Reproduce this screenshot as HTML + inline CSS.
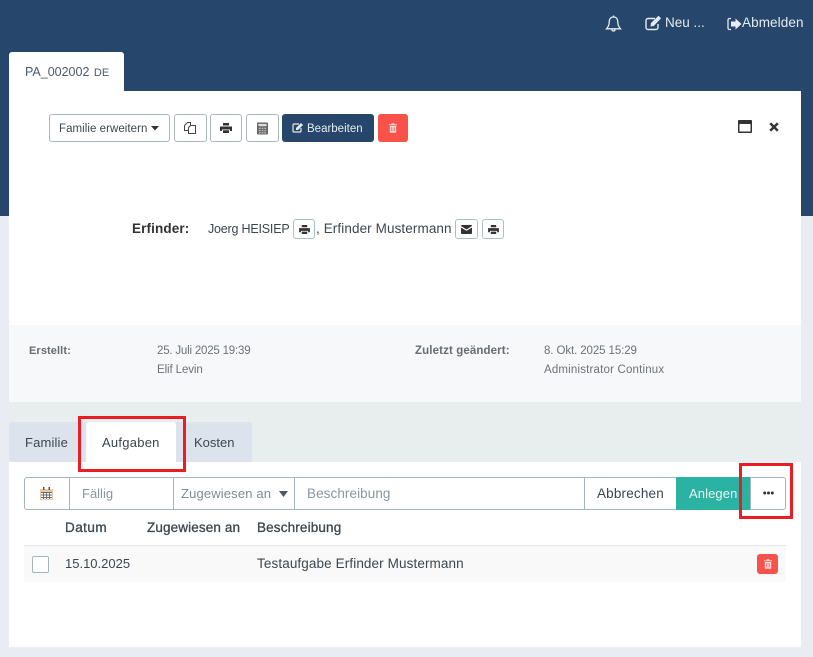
<!DOCTYPE html>
<html><head><meta charset="utf-8"><style>
html,body{margin:0;padding:0}
body{width:813px;height:657px;position:relative;overflow:hidden;background:#e9edf3;font-family:"Liberation Sans",sans-serif;color:#3c4650}
.a{position:absolute;box-sizing:border-box}
.t{position:absolute;white-space:nowrap;line-height:16px;font-size:13.5px}
.b{position:absolute;box-sizing:border-box;border:1px solid #a9b8bd;border-radius:3px;background:#fff}
svg{position:absolute;display:block}
</style></head><body>
<div class="a" style="left:0;top:0;width:813px;height:216px;background:#26476b"></div>
<div class="a" style="left:9px;top:52px;width:115px;height:40px;background:#fff;border-radius:3px 3px 0 0"></div>
<div class="a" style="left:9px;top:91px;width:792px;height:556px;background:#fff"></div>
<div class="a" style="left:9px;top:325px;width:792px;height:77px;background:#f7f8fa"></div>
<div class="a" style="left:9px;top:402px;width:792px;height:60px;background:#e8edee"></div>
<div class="a" style="left:9px;top:422px;width:243px;height:40px;background:#dce3ec;border-radius:3px 3px 0 0"></div>
<div class="a" style="left:86px;top:422px;width:90px;height:40px;background:#fff;border-radius:3px 3px 0 0"></div>

<!-- header -->
<svg style="left:605px;top:15px" width="17" height="18" viewBox="0 0 17 18" fill="none" stroke="#e6ebf0" stroke-width="1.3"><path d="M8.500 2c-3 0-4.300 2.300-4.300 5 0 3.500-1 5-2.700 6.800h14c-1.700-1.800-2.700-3.300-2.700-6.800 0-2.700-1.300-5-4.300-5z"/><path d="M7 14.500c0 2 3 2 3 0M8.500 .5v1.500"/></svg>
<svg style="left:645px;top:15px" width="17" height="16" viewBox="0 0 17 16" fill="none"><path d="M10 3.500H3a2 2 0 0 0-2 2v7a2 2 0 0 0 2 2h8a2 2 0 0 0 2-2V9" stroke="#e6ebf0" stroke-width="1.400"/><path d="M6 8l7.500-7.300 2.600 2.600L8.800 11 5.500 11.500z" fill="#e6ebf0"/></svg>
<div class="t" style="left:665px;top:15px;color:#e6ebf0;font-size:13.5px">Neu ...</div>
<svg style="left:727px;top:17px" width="15" height="14" viewBox="0 0 15 14" fill="none"><path d="M4 1.500H2.500a1.500 1.500 0 0 0-1.500 1.500v8a1.500 1.500 0 0 0 1.500 1.500H4" stroke="#e6ebf0" stroke-width="1.300"/><path d="M4 4.500h4.500V1.500L14.500 7l-6 5.500v-3H4z" fill="#e6ebf0"/></svg>
<div class="t" style="left:742px;top:15px;color:#e6ebf0;font-size:13.5px;letter-spacing:.1px">Abmelden</div>

<!-- tab title -->
<div class="t" style="left:25px;top:64px;color:#4a5a70;font-size:12.5px">PA_002002 <span style="font-size:11px;margin-left:1px">DE</span></div>

<!-- toolbar -->
<div class="b" style="left:49px;top:114px;width:121px;height:28px"></div>
<div class="t" style="left:59px;top:121px;font-size:11.5px;letter-spacing:.05px">Familie erweitern</div>
<svg style="left:151px;top:126px" width="8" height="5" viewBox="0 0 8 5"><path d="M0 0h8L4 4.500z" fill="#333"/></svg>
<div class="b" style="left:174px;top:114px;width:33px;height:28px"></div>
<svg style="left:184px;top:122px" width="12" height="12" viewBox="0 0 12 12" fill="none" stroke="#444" stroke-width="1"><path d="M.5 3.500L3.500 .5h3v2.500M.5 3.500v5h3.500"/><path d="M4.500 5.500L6.500 3.500h5v8h-7z"/></svg>
<div class="b" style="left:210px;top:114px;width:32px;height:28px"></div>
<svg style="left:220px;top:123px" width="12" height="10" viewBox="0 0 12 10"><path d="M3 0h6v2.500H3zM0 3.500h12V8H10V6.500H2V8H0zM3 7.300h6V10H3z" fill="#333"/></svg>
<div class="b" style="left:246px;top:114px;width:33px;height:28px"></div>
<svg style="left:257px;top:122px" width="11" height="13" viewBox="0 0 12 13"><path d="M1 0h10a1 1 0 0 1 1 1v11a1 1 0 0 1-1 1H1a1 1 0 0 1-1-1V1a1 1 0 0 1 1-1z" fill="#666"/><path d="M1.500 1.500h9v2.500h-9z" fill="#ddd"/><path d="M2 5.500h2v1.500H2zM5 5.500h2v1.500H5zM8 5.500h2v1.500H8zM2 8h2v1.500H2zM5 8h2v1.500H5zM8 8h2v1.500H8zM2 10.500h2V12H2zM5 10.500h2V12H5zM8 10.500h2V12H8z" fill="#bbb"/></svg>
<div class="a" style="left:282px;top:114px;width:92px;height:28px;background:#26476b;border-radius:3px"></div>
<svg style="left:292px;top:122px" width="12" height="11" viewBox="0 0 12 11" fill="none"><path d="M7 2H2a1 1 0 0 0-1 1v6a1 1 0 0 0 1 1h6a1 1 0 0 0 1-1V6" stroke="#e6ebf0" stroke-width="1.200"/><path d="M4 6l5-5 2 2-5 5H4z" fill="#e6ebf0"/></svg>
<div class="t" style="left:307px;top:121px;color:#e6ebf0;font-size:11.5px">Bearbeiten</div>
<div class="a" style="left:378px;top:114px;width:30px;height:28px;background:#f9524a;border-radius:3px"></div>
<svg style="left:389px;top:123px" width="8" height="10" viewBox="0 0 10 12"><path d="M3.500 0h3l.5 1.500H10v1H0v-1h3zM1 3.500h8V11a1 1 0 0 1-1 1H2a1 1 0 0 1-1-1z" fill="#fde0de"/><path d="M3 5v5M5 5v5M7 5v5" stroke="#f9524a" stroke-width=".8"/></svg>

<!-- window icons -->
<svg style="left:738px;top:120px" width="14" height="13" viewBox="0 0 14 13"><path d="M0 1a1 1 0 0 1 1-1h12a1 1 0 0 1 1 1v11a1 1 0 0 1-1 1H1a1 1 0 0 1-1-1zM1.500 4v7.500h11V4z" fill="#333" fill-rule="evenodd"/></svg>
<svg style="left:769px;top:122px" width="10" height="10" viewBox="0 0 10 10"><path d="M1.200 1.200l7.600 7.600M8.800 1.200L1.200 8.800" stroke="#333" stroke-width="2.500"/></svg>

<!-- Erfinder -->
<div class="t" style="left:132px;top:221px;font-weight:bold;font-size:13.5px;color:#333;letter-spacing:.12px">Erfinder:</div>
<div class="t" style="left:208px;top:221px;font-size:12.5px;letter-spacing:-.2px">Joerg HEISIEP</div>
<div class="b" style="left:293px;top:219px;width:22px;height:20px;border-color:#a9c0c4"></div>
<svg style="left:299px;top:225px" width="11" height="9" viewBox="0 0 12 10"><path d="M3 0h6v2.500H3zM0 3.500h12V8H10V6.500H2V8H0zM3 7.300h6V10H3z" fill="#333"/></svg>
<div class="t" style="left:316px;top:221px;font-size:13.5px;letter-spacing:.1px">, Erfinder Mustermann</div>
<div class="b" style="left:455px;top:219px;width:23px;height:20px;border-color:#a9c0c4"></div>
<svg style="left:461px;top:225px" width="11" height="9" viewBox="0 0 11 9"><path d="M1 0h9a1 1 0 0 1 1 1L5.500 4.500 0 1a1 1 0 0 1 1-1zM0 2.500l5.500 3.300L11 2.500V8a1 1 0 0 1-1 1H1a1 1 0 0 1-1-1z" fill="#333"/></svg>
<div class="b" style="left:482px;top:219px;width:22px;height:20px;border-color:#a9c0c4"></div>
<svg style="left:488px;top:225px" width="11" height="9" viewBox="0 0 12 10"><path d="M3 0h6v2.500H3zM0 3.500h12V8H10V6.500H2V8H0zM3 7.300h6V10H3z" fill="#333"/></svg>

<!-- meta -->
<div class="t" style="left:29px;top:343px;font-size:11px;font-weight:bold;color:#666c72;letter-spacing:.1px">Erstellt:</div>
<div class="t" style="left:157px;top:343px;font-size:11.5px;color:#6c7278;letter-spacing:-.2px">25. Juli 2025 19:39</div>
<div class="t" style="left:157px;top:362px;font-size:11.5px;color:#6c7278;letter-spacing:-.1px">Elif Levin</div>
<div class="t" style="left:415px;top:343px;font-size:11.5px;font-weight:bold;color:#666c72;letter-spacing:.12px">Zuletzt geändert:</div>
<div class="t" style="left:544px;top:343px;font-size:11.5px;color:#6c7278;letter-spacing:-.1px">8. Okt. 2025 15:29</div>
<div class="t" style="left:544px;top:362px;font-size:11.5px;color:#6c7278;letter-spacing:.18px">Administrator Continux</div>

<!-- tabs -->
<div class="t" style="left:25px;top:435px;font-size:13px;letter-spacing:.15px">Familie</div>
<div class="t" style="left:102px;top:435px;font-size:13px;letter-spacing:.25px">Aufgaben</div>
<div class="t" style="left:194px;top:435px;font-size:13px">Kosten</div>

<!-- input group -->
<div class="b" style="left:24px;top:477px;width:762px;height:33px;border-color:#a4b6ba"></div>
<div class="a" style="left:69px;top:477px;width:1px;height:33px;background:#a4b6ba"></div>
<div class="a" style="left:173px;top:477px;width:1px;height:33px;background:#a4b6ba"></div>
<div class="a" style="left:294px;top:477px;width:1px;height:33px;background:#a4b6ba"></div>
<div class="a" style="left:584px;top:477px;width:1px;height:33px;background:#a4b6ba"></div>
<div class="a" style="left:676px;top:477px;width:74px;height:33px;background:#2ab2a2"></div>
<div class="a" style="left:750px;top:477px;width:1px;height:33px;background:#a4b6ba"></div>
<svg style="left:40px;top:487px" width="13" height="13" viewBox="0 0 13 13"><path d="M0 2h13v11H0z" fill="#e8c9a0"/><path d="M1 5h11v7H1z" fill="#fff"/><path d="M1 5.500h11M1 8h11M1 10.500h11M3.500 5v7M6.500 5v7M9.500 5v7" stroke="#667" stroke-width=".9"/><path d="M3 0h1.500v3H3zM8.500 0H10v3H8.500z" fill="#556"/></svg>
<div class="t" style="left:82px;top:486px;font-size:13px;color:#8a96a0">Fällig</div>
<div class="t" style="left:181px;top:486px;font-size:13px;color:#7f8b98;letter-spacing:.15px">Zugewiesen an</div>
<svg style="left:279px;top:491px" width="9" height="6" viewBox="0 0 9 6"><path d="M0 0h9L4.500 6z" fill="#4a5a70"/></svg>
<div class="t" style="left:307px;top:486px;font-size:13.5px;color:#8a96a0;letter-spacing:.08px">Beschreibung</div>
<div class="t" style="left:597px;top:486px;font-size:13.5px;color:#3a4450;letter-spacing:.18px">Abbrechen</div>
<div class="t" style="left:689px;top:486px;font-size:13px;color:#e8f6f4;letter-spacing:.1px">Anlegen</div>
<svg style="left:763px;top:491px" width="11" height="4" viewBox="0 0 11 4"><circle cx="1.700" cy="2" r="1.500" fill="#333"/><circle cx="5.500" cy="2" r="1.500" fill="#333"/><circle cx="9.300" cy="2" r="1.500" fill="#333"/></svg>

<!-- table -->
<div class="t" style="left:65px;top:520px;font-size:13.5px;letter-spacing:.45px;-webkit-text-stroke:.3px #3c4650">Datum</div>
<div class="t" style="left:147px;top:520px;font-size:13.5px;letter-spacing:.12px;-webkit-text-stroke:.3px #3c4650">Zugewiesen an</div>
<div class="t" style="left:257px;top:520px;font-size:13.5px;letter-spacing:.15px;-webkit-text-stroke:.3px #3c4650">Beschreibung</div>
<div class="a" style="left:24px;top:545px;width:762px;height:37px;background:#f9f9f9;border-top:1px solid #e6e8e8"></div>
<div class="a" style="left:32px;top:556px;width:17px;height:17px;background:#fff;border:1px solid #a4b6ba;border-radius:2px"></div>
<div class="t" style="left:65px;top:556px;font-size:13px">15.10.2025</div>
<div class="t" style="left:257px;top:556px;font-size:13.5px;letter-spacing:.11px">Testaufgabe Erfinder Mustermann</div>
<div class="a" style="left:757px;top:554px;width:21px;height:20px;background:#f9524a;border-radius:3px"></div>
<svg style="left:764px;top:559px" width="8" height="10" viewBox="0 0 10 12"><path d="M3.500 0h3l.5 1.500H10v1H0v-1h3zM1 3.500h8V11a1 1 0 0 1-1 1H2a1 1 0 0 1-1-1z" fill="#fde0de"/><path d="M3 5v5M5 5v5M7 5v5" stroke="#f9524a" stroke-width=".8"/></svg>

<!-- red boxes -->
<div class="a" style="left:78px;top:416px;width:108px;height:56px;border:3px solid #ea1c24"></div>
<div class="a" style="left:739px;top:463px;width:54px;height:56px;border:3px solid #ea1c24"></div>
</body></html>
